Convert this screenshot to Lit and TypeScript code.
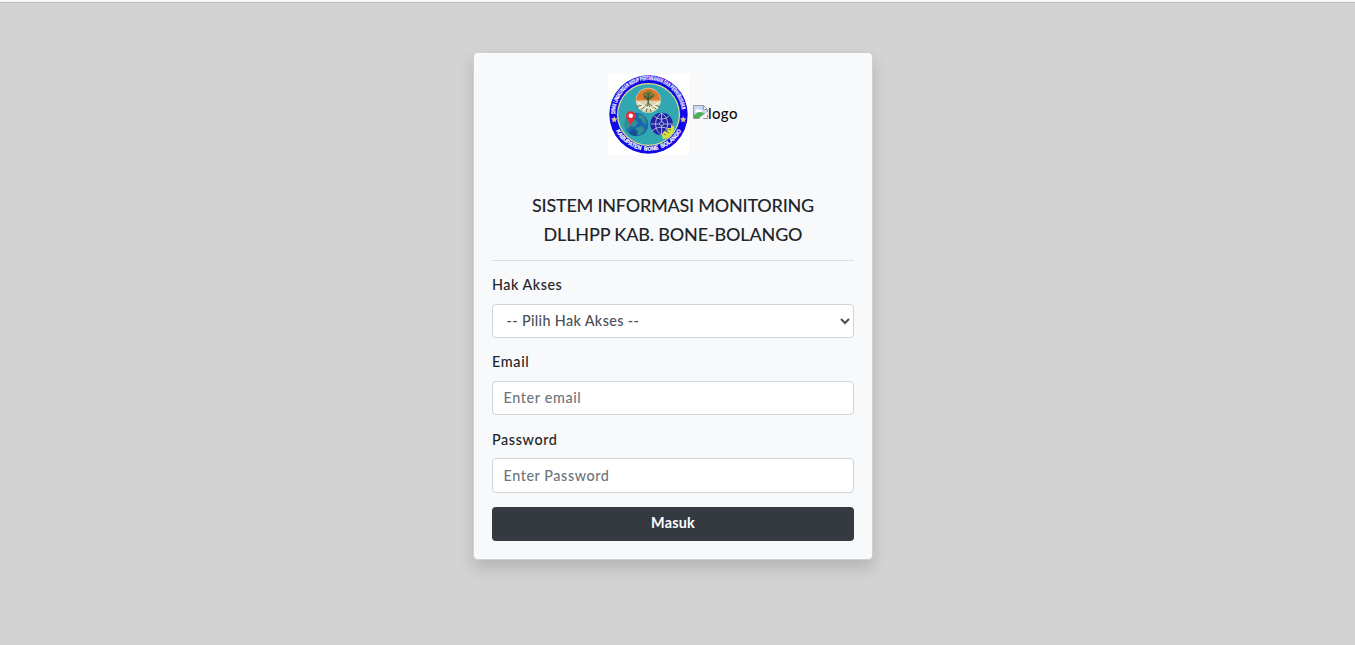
import { LitElement, html, css, svg } from "lit";
import { customElement } from "lit/decorators.js";

@customElement("agency-seal")
class AgencySeal extends LitElement {
  static styles = css`
    :host { display: block; width: 81px; height: 81px; background: #fff; }
    svg { display: block; }
    .ring { font-family: "Liberation Sans", sans-serif; font-weight: 700; fill: #fff; stroke: #fff; stroke-width: .2px; }
    .upper { font-size: 5.8px; }
    .lower { font-size: 5.8px; }
  `;
  render() {
    return html`<svg width="81" height="81" viewBox="0 0 81 81">
      ${svg`
      <defs>
        <path id="top" d="M7.8 45 A33.2 33.2 0 1 1 73.2 45"/>
        <path id="bottom" d="M7.5 56 A36.7 36.7 0 0 0 73.5 56"/>
        <clipPath id="globe"><circle cx="28.5" cy="50.5" r="11.5"/></clipPath>
      </defs>
      <circle cx="40.5" cy="40.5" r="39.2" fill="#1008e8"/>
      <circle cx="40.5" cy="40.5" r="31.6" fill="#d8dc8e"/>
      <circle cx="40.5" cy="40.5" r="30.3" fill="#31a7b1"/>
      <text class="ring upper"><textPath href="#top" startOffset="5" textLength="101" lengthAdjust="spacingAndGlyphs">DINAS LINGKUNGAN HIDUP PERTANAHAN DAN PERHUBUNGAN</textPath></text>
      <text class="ring lower"><textPath href="#bottom" startOffset="1" textLength="80" lengthAdjust="spacingAndGlyphs">KABUPATEN&#160; BONE&#160; BOLANGO</textPath></text>
      <path d="M6.2 42.7l.8 1.9 2 .1-1.6 1.3.5 2-1.7-1.1-1.7 1.1.5-2-1.6-1.3 2-.1zM75.2 42.7l.8 1.9 2 .1-1.6 1.3.5 2-1.7-1.1-1.7 1.1.5-2-1.6-1.3 2-.1z" fill="#e6cc83" stroke="#e6cc83" stroke-width=".5"/>
      <circle cx="40.3" cy="26.3" r="12.5" fill="#d7d5b5"/>
      <path d="M28.2 26.6a12.1 12.1 0 0 1 24.2 0z" fill="#e2792a"/>
      <path d="M35 22c-1-3 1-4 3-4 2-3 6-1 6 1 3 0 4 3 2 4-2 2-4 1-5 1-3 1-5 1-6-2z" fill="#7d7a37"/>
      <path d="M40.2 19v11m0-4l-4-4m4 4l4-4" fill="none" stroke="#3c5a3a" stroke-width="1.4"/>
      <path d="M40.2 29l-7 7m7-7l-2 9m2-9l3 9m-3-9l8 6m-14-4l-6 2m18-2l6 2" fill="none" stroke="#6b704c" stroke-width="1"/>
      <path d="M29 28l7 4-5 2m21-6-7 4 5 2M35 36l5-3 6 3" fill="none" stroke="#f9f5df" stroke-width="1.4"/>
      <circle cx="28.5" cy="50.5" r="11.8" fill="#176aaf"/>
      <g clip-path="url(#globe)">
        <path d="M17 44l7-5 4 2-2 4 4 3-3 5-5-1-2 4-4-3zM31 40l5 2 3 7-3 1-3-5-3-1zM28 54l6-2 3 4-5 5-4-1z" fill="#348f90"/>
        <path d="M20 60l5-5 5 2-2 6z" fill="#145197"/>
      </g>
      <path d="M22.8 52c-.5-4-4.8-6.2-4.8-10a4.8 4.8 0 0 1 9.6 0c0 3.8-4.3 6-4.8 10z" fill="#e02d39"/>
      <circle cx="22.8" cy="41.8" r="2.2" fill="#fff"/>
      <circle cx="53.6" cy="50" r="11.3" fill="#2522a8"/>
      <path d="M43 50h22M53.6 39v22M46 42c4 4 11 4 15 0M44 57c5-5 14-5 19 0M53.6 39c-8 5-8 17 0 22m0-22c8 5 8 17 0 22" fill="none" stroke="#b4c4dc" stroke-width=".9"/>
      <circle cx="53.6" cy="49.7" r="2" fill="#2522a8" stroke="#dce2e8" stroke-width=".7"/>
      <path d="M54 61l2-4 3 1 1-4 3 0 0-3 3 1c1 6-4 12-11 13z" fill="#d7e13e"/>
      <path d="M56 60l2 1m1-3 2 1m0-4 2 1" stroke="#5b7b38" stroke-width=".9"/>
      `}
    </svg>`;
  }
}

@customElement("app-root")
class AppRoot extends LitElement {
  static styles = css`
    :host {
      display: block; box-sizing: border-box; height: 645px; overflow: hidden;
      background: #d3d3d3; border-top: 2px solid #f7f7f7;
      font: 500 14.4px/22px Lato, sans-serif; color: #212529;
    }
    * { box-sizing: border-box; }
    .page { height: 100%; border-top: 1px solid #b9b9b9; padding-top: 49px; }
    .card {
      width: 400px; height: 508px; margin: 0 auto 0 473px; padding: 21px 18px 18px;
      background: #f8f9fb; background-clip: padding-box;
      border: 1px solid #cdcfd0; border-radius: 4px;
      box-shadow: 0 8px 16px rgba(0,0,0,.15);
    }
    .logos { display: flex; align-items: center; justify-content: center; height: 81px; gap: 4px; }
    .missing { display: flex; align-items: center; width: 45px; height: 20px; font-size: 15px; color: #111; margin-bottom: 3px; }
    .missing svg { flex: none; width: 16px; height: 16px; margin: -3px -1px 0 0; }
    .missing span { letter-spacing: .4px; }
    .title { margin: 36px 0 0; font-size: 18px; line-height: 29px; font-weight: 500; text-align: center; }
    .line { display: block; }
    .first { letter-spacing: -.24px; }
    .second { letter-spacing: -.16px; }
    .rule { height: 1px; margin: 11px 0 13px; background: #dfe0e2; }
    .group { height: 77.3px; }
    label { display: block; height: 30px; line-height: 22px; }
    .l1 { letter-spacing: .5px; }
    .l2 { letter-spacing: .65px; }
    .l3 { letter-spacing: .6px; }
    .control {
      display: block; width: 362px; height: 34px; padding: 5px 10.5px; margin: 0;
      border: 1px solid #ced4da; border-radius: 4px; background: #fff;
      font: 500 14.4px/22px Lato, sans-serif; color: #495057; outline: 0;
    }
    .role { padding: 4px 9.5px 6px; letter-spacing: .35px; }
    .email { letter-spacing: .62px; padding-top: 4px; }
    .password { letter-spacing: .56px; height: 34.6px; margin-top: -.4px; }
    .control::placeholder { color: #6c757d; opacity: 1; }
    .submit {
      display: block; width: 362px; height: 34px; border: 0; border-radius: 4px;
      margin-top: 1.1px; padding: 0 0 2px; background: #343a40; color: #fff;
      font: 700 14.4px/22px Lato, sans-serif; letter-spacing: .2px;
    }
  `;
  render() {
    return html`<main class="page"><section class="card">
      <div class="logos">
        <agency-seal></agency-seal>
        <div class="missing">
          <svg viewBox="0 0 16 16">
            <path d="M.5 1.5h10l4 4v3l-8 6h-6z" fill="#c5d8f7"/>
            <path d="M.5 14.5V1.5h10l4 4v3" fill="none" stroke="#999"/>
            <path d="M10.5 1.5v4h4z" fill="#fff" stroke="#999"/>
            <path d="M2.5 7c0-2 3-3 4-1 2-1 3 1 2 2h-6z" fill="#fff"/>
            <path d="M1 14V11l5-3 6 1-6 5z" fill="#4caf50"/>
            <path d="M7 15l8-7v7z" fill="#f8f9fb"/>
            <path d="M.5 14.5h6M10 14.5h4.5v-4" fill="none" stroke="#999"/>
          </svg><span>logo</span>
        </div>
      </div>
      <h1 class="title"><span class="line first">SISTEM INFORMASI MONITORING</span><span class="line second">DLLHPP KAB. BONE-BOLANGO</span></h1>
      <div class="rule"></div>
      <form>
        <div class="group"><label class="l1" for="role">Hak Akses</label>
          <select id="role" class="control role"><option>-- Pilih Hak Akses --</option></select></div>
        <div class="group"><label class="l2" for="email">Email</label>
          <input id="email" class="control email" placeholder="Enter email"></div>
        <div class="group"><label class="l3" for="password">Password</label>
          <input id="password" class="control password" type="password" placeholder="Enter Password"></div>
        <button type="button" class="submit">Masuk</button>
      </form>
    </section></main>`;
  }
}
